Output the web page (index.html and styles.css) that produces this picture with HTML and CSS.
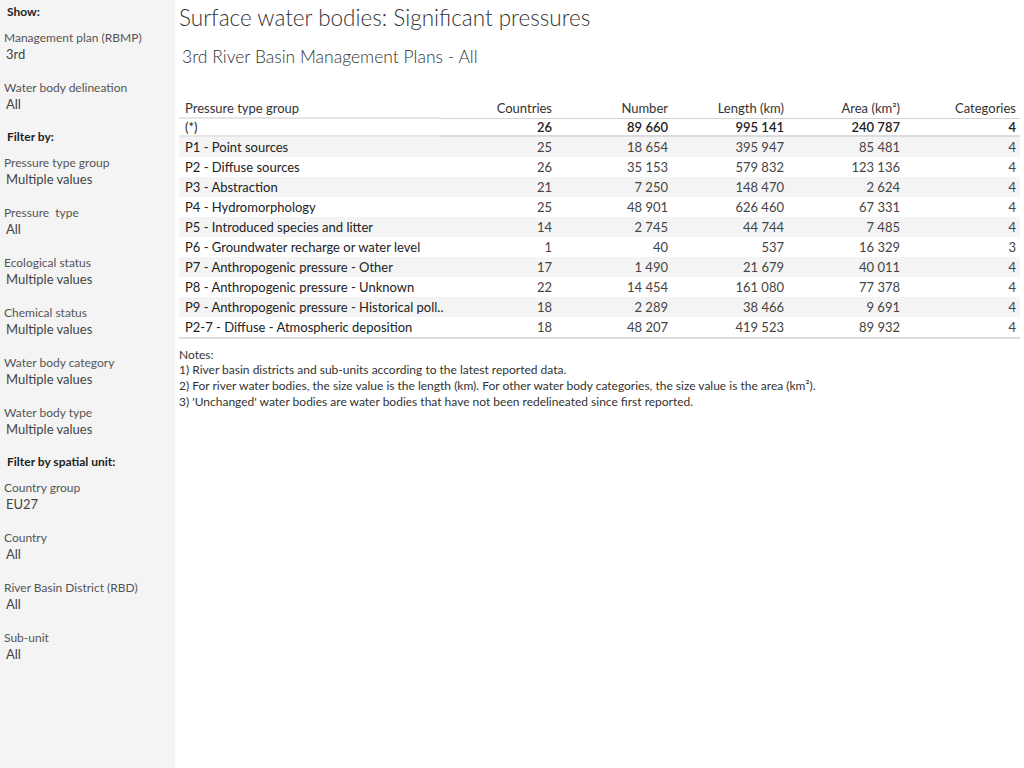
FILE: index.html
```html
<!DOCTYPE html>
<html lang="en">
<head>
  <meta charset="UTF-8" />
  <title>Surface water bodies: Significant pressures</title>
  <link rel="stylesheet" href="styles.css">
</head>
<body>
  <!-- Filter panel -->
  <aside id="sidebar">
    <div class="group-title">Show:</div>
    <div class="filter">
      <div class="filter-label">Management plan (RBMP)</div>
      <div class="filter-value">3rd</div>
    </div>
    <div class="filter">
      <div class="filter-label">Water body delineation</div>
      <div class="filter-value">All</div>
    </div>

    <div class="group-title">Filter by:</div>
    <div class="filter">
      <div class="filter-label">Pressure type group</div>
      <div class="filter-value">Multiple values</div>
    </div>
    <div class="filter">
      <div class="filter-label">Pressure&nbsp; type</div>
      <div class="filter-value">All</div>
    </div>
    <div class="filter">
      <div class="filter-label">Ecological status</div>
      <div class="filter-value">Multiple values</div>
    </div>
    <div class="filter">
      <div class="filter-label">Chemical status</div>
      <div class="filter-value">Multiple values</div>
    </div>
    <div class="filter">
      <div class="filter-label">Water body category</div>
      <div class="filter-value">Multiple values</div>
    </div>
    <div class="filter">
      <div class="filter-label">Water body type</div>
      <div class="filter-value">Multiple values</div>
    </div>

    <div class="group-title">Filter by spatial unit:</div>
    <div class="filter">
      <div class="filter-label">Country group</div>
      <div class="filter-value">EU27</div>
    </div>
    <div class="filter">
      <div class="filter-label">Country</div>
      <div class="filter-value">All</div>
    </div>
    <div class="filter">
      <div class="filter-label">River Basin District (RBD)</div>
      <div class="filter-value">All</div>
    </div>
    <div class="filter">
      <div class="filter-label">Sub-unit</div>
      <div class="filter-value">All</div>
    </div>
  </aside>

  <div id="main">
    <h1 class="title">Surface water bodies: Significant pressures</h1>
    <h2 class="subtitle">3rd River Basin Management Plans - All</h2>

    <table class="pressures">
      <colgroup>
        <col />
        <col class="num" /><col class="num" /><col class="num" /><col class="num" /><col class="num" />
      </colgroup>
      <thead>
        <tr>
          <th class="label">Pressure type group</th>
          <th>Countries</th>
          <th>Number</th>
          <th>Length (km)</th>
          <th>Area (km²)</th>
          <th>Categories</th>
        </tr>
      </thead>
      <tbody>
        <tr class="total">
          <td class="label">(*)</td>
          <td>26</td><td>89 660</td><td>995 141</td><td>240 787</td><td>4</td>
        </tr>
        <tr>
          <td class="label">P1 - Point sources</td>
          <td>25</td><td>18 654</td><td>395 947</td><td>85 481</td><td>4</td>
        </tr>
        <tr>
          <td class="label">P2 - Diffuse sources</td>
          <td>26</td><td>35 153</td><td>579 832</td><td>123 136</td><td>4</td>
        </tr>
        <tr>
          <td class="label">P3 - Abstraction</td>
          <td>21</td><td>7 250</td><td>148 470</td><td>2 624</td><td>4</td>
        </tr>
        <tr>
          <td class="label">P4 - Hydromorphology</td>
          <td>25</td><td>48 901</td><td>626 460</td><td>67 331</td><td>4</td>
        </tr>
        <tr>
          <td class="label">P5 - Introduced species and litter</td>
          <td>14</td><td>2 745</td><td>44 744</td><td>7 485</td><td>4</td>
        </tr>
        <tr>
          <td class="label">P6 - Groundwater recharge or water level</td>
          <td>1</td><td>40</td><td>537</td><td>16 329</td><td>3</td>
        </tr>
        <tr>
          <td class="label">P7 - Anthropogenic pressure - Other</td>
          <td>17</td><td>1 490</td><td>21 679</td><td>40 011</td><td>4</td>
        </tr>
        <tr>
          <td class="label">P8 - Anthropogenic pressure - Unknown</td>
          <td>22</td><td>14 454</td><td>161 080</td><td>77 378</td><td>4</td>
        </tr>
        <tr>
          <td class="label">P9 - Anthropogenic pressure - Historical poll..</td>
          <td>18</td><td>2 289</td><td>38 466</td><td>9 691</td><td>4</td>
        </tr>
        <tr>
          <td class="label">P2-7 - Diffuse - Atmospheric deposition</td>
          <td>18</td><td>48 207</td><td>419 523</td><td>89 932</td><td>4</td>
        </tr>
      </tbody>
    </table>

    <div class="notes">
      <div class="notes-head">Notes:</div>
      <div>1) River basin districts and sub-units according to the latest reported data.</div>
      <div>2) For river water bodies, the size value is the length (km). For other water body categories, the size value is the area (km²).</div>
      <div>3) 'Unchanged' water bodies are water bodies that have not been redelineated since first reported.</div>
    </div>
  </div>
</body>
</html>
```

FILE: styles.css
```css
body {
  margin: 0;
  font-family: Lato, "Open Sans", sans-serif;
  color: #333;
  background-color: #fff;
  display: flex;
  flex-direction: row;
  min-height: 768px;
}

#sidebar {
  width: 175px;
  flex-shrink: 0;
  background-color: #f4f4f4;
  padding-top: 5px;
  box-sizing: border-box;
}

.group-title {
  height: 25px;
  line-height: 14px;
  padding-left: 7px;
  font-size: 12px;
  font-weight: bold;
  color: #222;
  box-sizing: border-box;
}

.filter {
  height: 50px;
  padding-left: 4px;
}

.filter-label {
  line-height: 16px;
  font-size: 12px;
  color: #555;
}

.filter-value {
  line-height: 17px;
  padding-left: 2px;
  font-size: 13px;
  color: #444;
}

#main {
  flex-grow: 1;
  padding-left: 4px;
  padding-right: 4px;
}

.title {
  margin: 0;
  padding-top: 5px;
  height: 36px;
  line-height: 26px;
  font-size: 22.5px;
  font-weight: 300;
  color: #333;
  box-sizing: border-box;
}

.subtitle {
  margin: 0;
  padding-left: 3px;
  padding-top: 9px;
  height: 63px;
  line-height: 24px;
  font-size: 17.5px;
  font-weight: 300;
  color: #333;
  box-sizing: border-box;
}

/* numbers table: fixed 116px value columns, label takes the rest */
table.pressures {
  width: 841px;
  table-layout: fixed;
  border-collapse: collapse;
  font-size: 13px;
}

.pressures col.num {
  width: 116px;
}

.pressures th,
.pressures td {
  padding: 0 4px 0 0;
  height: 20px;
  line-height: 20px;
  text-align: right;
  white-space: nowrap;
  color: #444;
}

.pressures th {
  height: 18px;
  line-height: 18px;
  font-weight: normal;
  color: #333;
  border-bottom: 1px solid #d4d4d4;
}

.pressures .label {
  text-align: left;
  padding-left: 6px;
  color: #222;
}

.pressures th.label {
  color: #333;
  border-bottom: 2px solid #e6e6e6;
}

.pressures tbody tr:nth-child(even) {
  background-color: #f4f4f4;
}

.pressures tr.total td {
  height: 16px;
  line-height: 16px;
  color: #222;
  font-weight: 600;
  border-bottom: 2px solid #dcdcdc;
}

.pressures tr.total td.label {
  font-weight: normal;
  border-bottom-color: #e6e6e6;
}

.pressures tbody tr:last-child td {
  border-bottom: 2px solid #dcdcdc;
}

.notes {
  margin-top: 9px;
  font-size: 12px;
  line-height: 16px;
  color: #333;
}

.notes-head {
  line-height: 14px;
}
```
